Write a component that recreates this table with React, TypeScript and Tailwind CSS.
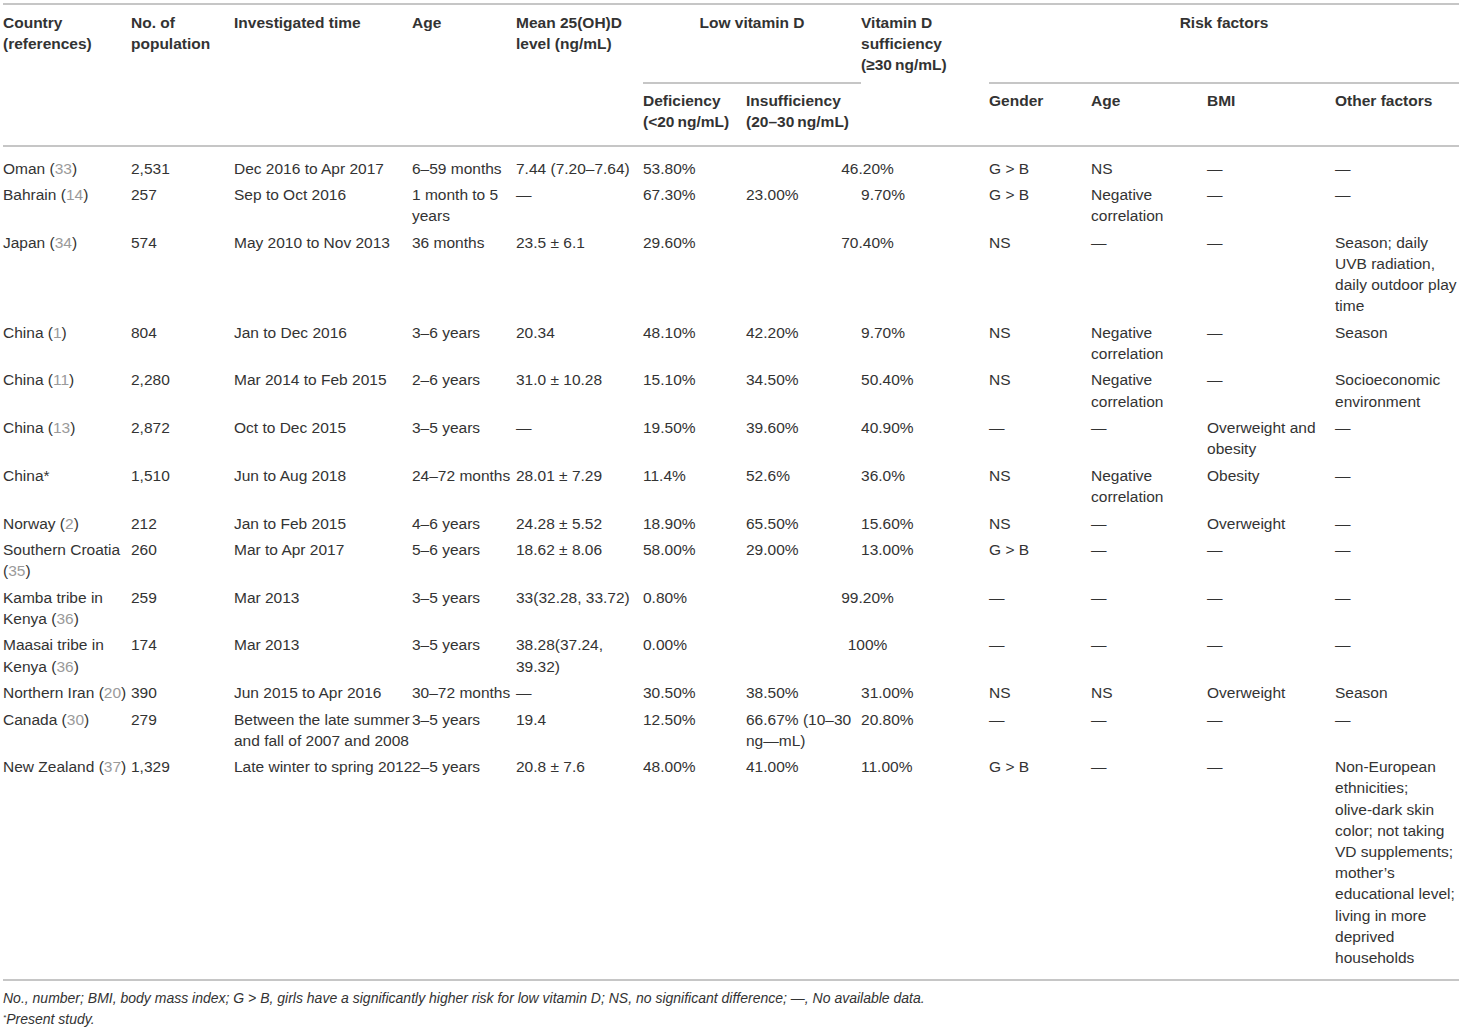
import type { ReactNode } from 'react'

// referencias en gris
const R = ({ children }: { children: ReactNode }) => <span className="text-[#9a9a9a]">{children}</span>
const NW = ({ children }: { children: ReactNode }) => <span className="whitespace-nowrap">{children}</span>

type Row = {
  country: ReactNode
  n: string
  time: string
  age: string
  mean: string
  def: string
  ins?: string
  suf?: string
  merged?: string
  gender: string
  rAge: string
  bmi: string
  other: ReactNode
  nowrapTime?: boolean
}

const rows: Row[] = [
  { country: <>Oman (<R>33</R>)</>, n: '2,531', time: 'Dec 2016 to Apr 2017', age: '6–59 months', mean: '7.44 (7.20–7.64)', def: '53.80%', merged: '46.20%', gender: 'G > B', rAge: 'NS', bmi: '—', other: '—' },
  { country: <>Bahrain (<R>14</R>)</>, n: '257', time: 'Sep to Oct 2016', age: '1 month to 5 years', mean: '—', def: '67.30%', ins: '23.00%', suf: '9.70%', gender: 'G > B', rAge: 'Negative correlation', bmi: '—', other: '—' },
  { country: <>Japan (<R>34</R>)</>, n: '574', time: 'May 2010 to Nov 2013', age: '36 months', mean: '23.5 ± 6.1', def: '29.60%', merged: '70.40%', gender: 'NS', rAge: '—', bmi: '—', other: 'Season; daily UVB radiation, daily outdoor play time' },
  { country: <>China (<R>1</R>)</>, n: '804', time: 'Jan to Dec 2016', age: '3–6 years', mean: '20.34', def: '48.10%', ins: '42.20%', suf: '9.70%', gender: 'NS', rAge: 'Negative correlation', bmi: '—', other: 'Season' },
  { country: <>China (<R>11</R>)</>, n: '2,280', time: 'Mar 2014 to Feb 2015', age: '2–6 years', mean: '31.0 ± 10.28', def: '15.10%', ins: '34.50%', suf: '50.40%', gender: 'NS', rAge: 'Negative correlation', bmi: '—', other: 'Socioeconomic environment' },
  { country: <>China (<R>13</R>)</>, n: '2,872', time: 'Oct to Dec 2015', age: '3–5 years', mean: '—', def: '19.50%', ins: '39.60%', suf: '40.90%', gender: '—', rAge: '—', bmi: 'Overweight and obesity', other: '—' },
  { country: <>China*</>, n: '1,510', time: 'Jun to Aug 2018', age: '24–72 months', mean: '28.01 ± 7.29', def: '11.4%', ins: '52.6%', suf: '36.0%', gender: 'NS', rAge: 'Negative correlation', bmi: 'Obesity', other: '—' },
  { country: <>Norway (<R>2</R>)</>, n: '212', time: 'Jan to Feb 2015', age: '4–6 years', mean: '24.28 ± 5.52', def: '18.90%', ins: '65.50%', suf: '15.60%', gender: 'NS', rAge: '—', bmi: 'Overweight', other: '—' },
  { country: <>Southern Croatia (<R>35</R>)</>, n: '260', time: 'Mar to Apr 2017', age: '5–6 years', mean: '18.62 ± 8.06', def: '58.00%', ins: '29.00%', suf: '13.00%', gender: 'G > B', rAge: '—', bmi: '—', other: '—' },
  { country: <>Kamba tribe in Kenya (<R>36</R>)</>, n: '259', time: 'Mar 2013', age: '3–5 years', mean: '33(32.28, 33.72)', def: '0.80%', merged: '99.20%', gender: '—', rAge: '—', bmi: '—', other: '—' },
  { country: <>Maasai tribe in Kenya (<R>36</R>)</>, n: '174', time: 'Mar 2013', age: '3–5 years', mean: '38.28(37.24, 39.32)', def: '0.00%', merged: '100%', gender: '—', rAge: '—', bmi: '—', other: '—' },
  { country: <>Northern Iran (<R>20</R>)</>, n: '390', time: 'Jun 2015 to Apr 2016', age: '30–72 months', mean: '—', def: '30.50%', ins: '38.50%', suf: '31.00%', gender: 'NS', rAge: 'NS', bmi: 'Overweight', other: 'Season' },
  { country: <>Canada (<R>30</R>)</>, n: '279', time: 'Between the late summer and fall of 2007 and 2008', age: '3–5 years', mean: '19.4', def: '12.50%', ins: '66.67% (10–30 ng—mL)', suf: '20.80%', gender: '—', rAge: '—', bmi: '—', other: '—' },
  {
    country: <>New Zealand (<R>37</R>)</>, n: '1,329', time: 'Late winter to spring 2012', age: '2–5 years', mean: '20.8 ± 7.6', def: '48.00%', ins: '41.00%', suf: '11.00%', gender: 'G > B', rAge: '—', bmi: '—',
    other: <><NW>Non-European</NW> ethnicities; <NW>olive-dark</NW> skin color; not taking VD supplements; mother’s educational level; living in more deprived households</>,
    nowrapTime: true,
  },
]

const App = () => {
  const th = 'p-0 align-top font-bold'
  const line = 'border-b-2 border-[#c6c6c6]'

  return (
    <div className="min-h-screen bg-white text-[#333] font-['Liberation_Sans',Arial,sans-serif] text-[15.5px] leading-[21.2px]">
      <div className="ml-[3px] pt-[3px] w-[1456px]">
        <table className="table-fixed w-[1456px] border-separate border-spacing-0 border-t-2 border-[#c6c6c6]">
          <colgroup>
            <col className="w-[128px]" />
            <col className="w-[103px]" />
            <col className="w-[178px]" />
            <col className="w-[104px]" />
            <col className="w-[127px]" />
            <col className="w-[103px]" />
            <col className="w-[115px]" />
            <col className="w-[128px]" />
            <col className="w-[102px]" />
            <col className="w-[116px]" />
            <col className="w-[128px]" />
            <col className="w-[124px]" />
          </colgroup>
          <thead>
            <tr>
              <th rowSpan={2} className={`${th} ${line} text-left pt-[7px]`}>Country (references)</th>
              <th rowSpan={2} className={`${th} ${line} text-left pt-[7px]`}>No. of population</th>
              <th rowSpan={2} className={`${th} ${line} text-left pt-[7px]`}>Investigated time</th>
              <th rowSpan={2} className={`${th} ${line} text-left pt-[7px]`}>Age</th>
              <th rowSpan={2} className={`${th} ${line} text-left pt-[7px]`}>Mean 25(OH)D level (ng/mL)</th>
              <th colSpan={2} className={`${th} ${line} text-center h-[79px] pt-[7px]`}>Low vitamin D</th>
              <th rowSpan={2} className={`${th} ${line} text-left pt-[7px]`}>Vitamin D sufficiency (≥30&#8239;ng/mL)</th>
              <th colSpan={4} className={`${th} ${line} text-center h-[79px] pt-[7px]`}>Risk factors</th>
            </tr>
            <tr>
              <th className={`${th} ${line} text-left h-[63px] pt-[6px]`}>Deficiency (&lt;20&#8239;ng/mL)</th>
              <th className={`${th} ${line} text-left h-[63px] pt-[6px]`}>Insufficiency (20–30&#8239;ng/mL)</th>
              <th className={`${th} ${line} text-left h-[63px] pt-[6px]`}>Gender</th>
              <th className={`${th} ${line} text-left h-[63px] pt-[6px]`}>Age</th>
              <th className={`${th} ${line} text-left h-[63px] pt-[6px]`}>BMI</th>
              <th className={`${th} ${line} text-left h-[63px] pt-[6px]`}>Other factors</th>
            </tr>
          </thead>
          <tbody>
            {rows.map((r, i) => {
              const first = i === 0
              const last = i === rows.length - 1
              const td = `p-0 align-top ${first ? 'pt-[10.5px]' : 'pt-[2.65px]'} ${last ? 'pb-[11px] border-b-2 border-[#c6c6c6]' : 'pb-[2.65px]'}`
              return (
                <tr key={i}>
                  <td className={`${td} text-left`}>{r.country}</td>
                  <td className={`${td} text-left`}>{r.n}</td>
                  <td className={`${td} text-left ${r.nowrapTime ? 'whitespace-nowrap' : ''}`}>{r.time}</td>
                  <td className={`${td} text-left`}>{r.age}</td>
                  <td className={`${td} text-left`}>{r.mean}</td>
                  <td className={`${td} text-left`}>{r.def}</td>
                  {r.merged ? (
                    <td colSpan={2} className={`${td} text-center`}>{r.merged}</td>
                  ) : (
                    <>
                      <td className={`${td} text-left`}>{r.ins}</td>
                      <td className={`${td} text-left`}>{r.suf}</td>
                    </>
                  )}
                  <td className={`${td} text-left`}>{r.gender}</td>
                  <td className={`${td} text-left`}>{r.rAge}</td>
                  <td className={`${td} text-left`}>{r.bmi}</td>
                  <td className={`${td} text-left`}>{r.other}</td>
                </tr>
              )
            })}
          </tbody>
        </table>

        <div className="pt-[7px] italic text-[14px] leading-[21px]">
          <p>No., number; BMI, body mass index; G &gt; B, girls have a significantly higher risk for low vitamin D; NS, no significant difference; —, No available data.</p>
          <p><sup className="text-[8px]">*</sup>Present study.</p>
        </div>
      </div>
    </div>
  )
}

export default App
